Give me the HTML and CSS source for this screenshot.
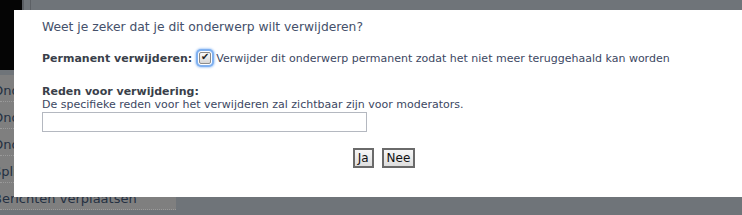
FILE: index.html
```html
<!DOCTYPE html>
<html lang="nl">
<head>
    <meta charset="UTF-8">
    <title>Onderwerp verwijderen</title>
    <link rel="stylesheet" href="styles.css">
</head>
<body>
    <!-- pagina achter de overlay -->
    <div class="page">
        <div class="sidebar">
            <div class="sidebar-top">
                <div class="logo"></div>
                <div class="top-gap"></div>
            </div>
            <ul class="menu">
                <li>Onderwerp sluiten</li>
                <li>Onderwerp vastzetten</li>
                <li>Onderwerp verwijderen</li>
                <li>Splitsen</li>
                <li>Berichten verplaatsen</li>
            </ul>
        </div>
    </div>

    <!-- verwijder dialoog -->
    <div class="dialog">
        <h2 class="dialog-title">Weet je zeker dat je dit onderwerp wilt verwijderen?</h2>

        <div class="row">
            <label class="label" for="permanent">Permanent verwijderen:</label>
            <span class="check"><input id="permanent" type="checkbox" checked></span>
            <span class="check-text">Verwijder dit onderwerp permanent zodat het niet meer teruggehaald kan worden</span>
        </div>

        <div class="reason">
            <label class="label" for="reason">Reden voor verwijdering:</label>
            <p class="hint">De specifieke reden voor het verwijderen zal zichtbaar zijn voor moderators.</p>
            <input id="reason" class="reason-input" type="text">
        </div>

        <div class="buttons">
            <button class="btn">Ja</button>
            <button class="btn">Nee</button>
        </div>
    </div>
</body>
</html>
```

FILE: styles.css
```css
body {
    margin: 0;
    width: 742px;
    height: 215px;
    overflow: hidden;
    background-color: #6f7479;
    font-family: "DejaVu Sans", Verdana, sans-serif;
    position: relative;
}

.page {
    display: flex;
}

.sidebar {
    width: 176px;
}

.sidebar-top {
    display: flex;
    height: 75px;
}

.logo {
    width: 22px;
    height: 70px;
    background-color: #050505;
    border-right: 2px solid #5a5e63;
}

.top-gap {
    width: 6px;
    border-right: 1px solid #5c6065;
}

.menu {
    list-style: none;
    margin: 0;
    padding: 0;
    background-color: #7f7f7f;
}

.menu li {
    height: 26px;
    line-height: 32px;
    font-size: 13px;
    color: #243042;
    text-indent: -7px;
    white-space: nowrap;
    overflow: hidden;
    border-bottom: 1px dotted #9a9a9a;
}

/* dialoog */
.dialog {
    position: absolute;
    left: 14px;
    top: 10px;
    width: 700px;
    height: 169px;
    padding: 10px 0 8px 28px;
    background-color: #fff;
    color: #3c4762;
    font-size: 11px;
}

.dialog-title {
    margin: 0 0 17px;
    font-size: 12.3px;
    font-weight: normal;
    color: #44506a;
}

.row {
    display: flex;
    align-items: center;
    gap: 3px;
}

.label {
    font-weight: bold;
    color: #3a3f4a;
}

.check {
    display: inline-flex;
    padding: 1px;
    margin: 0 1px 0 3px;
    border-radius: 3px;
    box-shadow: 0 0 0 2px #7fb0f0, 0 0 2px 3px #b8d4f8;
}

.check input {
    appearance: none;
    -webkit-appearance: none;
    position: relative;
    margin: 0;
    width: 12px;
    height: 12px;
    border: 1px solid #8c8c8c;
    border-radius: 2px;
    background: linear-gradient(#fafafa, #d6d6d6);
}

.check input:checked::after {
    content: "\2714";
    position: absolute;
    left: 1px;
    top: -2px;
    font-size: 10px;
    color: #222;
}

.check-text {
    color: #3c4762;
}

.reason {
    margin-top: 20px;
}

.reason .label {
    display: block;
}

.hint {
    margin: 0 0 1px;
}

.reason-input {
    width: 319px;
    height: 14px;
    padding: 2px;
    border: 1px solid #b4b8c0;
    font-size: 11px;
}

.buttons {
    display: flex;
    justify-content: center;
    gap: 8px;
    margin-top: 16px;
    padding-right: 16px;
}

.btn {
    font-family: "DejaVu Sans", sans-serif;
    font-size: 12px;
    line-height: 14px;
    color: #111;
    padding: 1px 3px;
    background: linear-gradient(#f6f6f6, #dedede);
    border: 2px solid #6a6a6a;
    border-radius: 0;
}
```
